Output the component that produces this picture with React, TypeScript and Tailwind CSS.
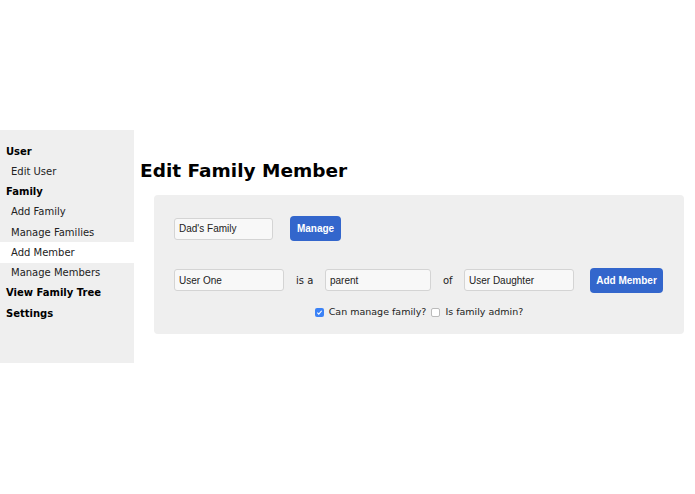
import React from "react";

const sidebarItems: { label: string; bold?: boolean; active?: boolean }[] = [
  { label: "User", bold: true },
  { label: "Edit User" },
  { label: "Family", bold: true },
  { label: "Add Family" },
  { label: "Manage Families" },
  { label: "Add Member", active: true },
  { label: "Manage Members" },
  { label: "View Family Tree", bold: true },
  { label: "Settings", bold: true },
];

function Field({ value, w }: { value: string; w: string }) {
  return (
    <div
      className={`${w} h-[22px] flex items-center px-[4px] bg-[#f8f8f8] border border-[#d4d4d4] rounded-[3px] text-[10px] text-[#222] font-['Liberation_Sans',Arial,sans-serif] whitespace-nowrap`}
    >
      {value}
    </div>
  );
}

function Btn({ label, w }: { label: string; w: string }) {
  return (
    <div
      className={`${w} h-[25px] flex items-center justify-center rounded-[4px] bg-[#3366cc] text-white text-[10px] font-bold font-['Liberation_Sans',Arial,sans-serif] whitespace-nowrap`}
    >
      {label}
    </div>
  );
}

export default function App() {
  return (
    <div className="w-[695px] h-[494px] bg-white font-['DejaVu_Sans',Verdana,sans-serif] text-[#111]">
      <div className="flex pt-[130px]">
        <div className="w-[134px] h-[233px] bg-[#efefef] pt-[11px] shrink-0">
          {sidebarItems.map((it) => (
            <div
              key={it.label}
              className={`h-[20.25px] flex items-center text-[10px] whitespace-nowrap ${
                it.bold ? "font-bold pl-[6px] text-black" : "pl-[11px] text-[#222]"
              } ${it.active ? "bg-white" : ""}`}
            >
              {it.label}
            </div>
          ))}
        </div>
        <div className="pl-[6px] flex-1">
          <h1 className="mt-[29px] h-[24px] leading-[24px] text-[18.5px] font-bold text-black whitespace-nowrap">
            Edit Family Member
          </h1>
          <div className="mt-[12px] ml-[14px] w-[530px] h-[139px] bg-[#efefef] rounded-[4px] pl-[20px] pt-[21px]">
            <div className="flex items-center h-[25px]">
              <Field value="Dad's Family" w="w-[99px]" />
              <div className="ml-[17px]">
                <Btn label="Manage" w="w-[51px]" />
              </div>
            </div>
            <div className="flex items-center h-[26px] mt-[26px] text-[10px] text-[#222]">
              <Field value="User One" w="w-[110px]" />
              <span className="ml-[12px] w-[16px] whitespace-nowrap">is a</span>
              <div className="ml-[13px]">
                <Field value="parent" w="w-[106px]" />
              </div>
              <span className="ml-[12px] w-[9px]">of</span>
              <div className="ml-[12px]">
                <Field value="User Daughter" w="w-[110px]" />
              </div>
              <div className="ml-[16px]">
                <Btn label="Add Member" w="w-[73px]" />
              </div>
            </div>
            <div className="flex items-center justify-center h-[14px] mt-[12px] mr-[20px] text-[9.5px] text-[#222] whitespace-nowrap">
              <span className="w-[9px] h-[9px] rounded-[2px] bg-[#3b82f6] flex items-center justify-center">
                <svg width="7" height="7" viewBox="0 0 8 8">
                  <path d="M1.5 4.2 L3.2 5.8 L6.5 2" stroke="white" strokeWidth="1.3" fill="none" />
                </svg>
              </span>
              <span className="ml-[5px]">Can manage family?</span>
              <span className="ml-[5px] w-[9px] h-[9px] rounded-[2px] bg-white border border-[#bbb]" />
              <span className="ml-[5px]">Is family admin?</span>
            </div>
          </div>
        </div>
      </div>
    </div>
  );
}
